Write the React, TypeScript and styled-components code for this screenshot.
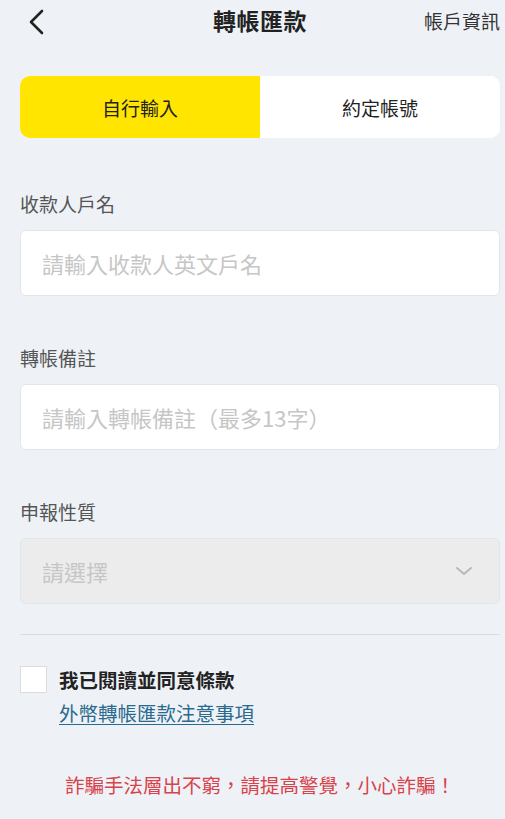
import styled, { createGlobalStyle } from "styled-components";

const GlobalStyle = createGlobalStyle`
  html, body {
    margin: 0;
    padding: 0;
    background: #eef2f7;
  }
  body {
    font-family: "Noto Sans CJK TC", "Noto Sans", sans-serif;
  }
`;

const Page = styled.div`
  width: 505px;
  height: 819px;
  box-sizing: border-box;
  padding: 0 5px 0 20px;
  background: #eef2f7;
  overflow: hidden;
`;

const Header = styled.div`
  height: 40px;
  display: grid;
  grid-template-columns: 90px 1fr 90px;
  align-items: center;
`;

const BackButton = styled.div`
  display: flex;
  align-items: center;
  padding-left: 6px;
  margin-top: 4px;
`;

const Title = styled.div`
  text-align: center;
  font-size: 23px;
  font-weight: 700;
  color: #222;
  letter-spacing: 0.5px;
`;

const HeaderLink = styled.div`
  text-align: right;
  font-size: 19px;
  color: #333;
`;

const Tabs = styled.div`
  margin-top: 36px;
  display: flex;
  height: 62px;
  border-radius: 10px;
  overflow: hidden;
  background: #ffffff;
`;

const Tab = styled.div<{ active?: boolean }>`
  flex: 1;
  display: flex;
  align-items: center;
  justify-content: center;
  font-size: 19px;
  color: #222;
  background: ${(props) => (props.active ? "#ffe500" : "#ffffff")};
`;

const Field = styled.div<{ first?: boolean }>`
  margin-top: ${(props) => (props.first ? "53px" : "49px")};
`;

const Label = styled.div`
  font-size: 19px;
  line-height: 26px;
  color: #555;
  margin-bottom: 13px;
`;

const InputBox = styled.div<{ disabled?: boolean }>`
  height: 66px;
  box-sizing: border-box;
  border: 1px solid #e2e5ea;
  border-radius: 6px;
  background: ${(props) => (props.disabled ? "#ececec" : "#ffffff")};
  display: flex;
  align-items: center;
  justify-content: space-between;
  padding: 0 26px 0 21px;
`;

const Placeholder = styled.span`
  font-size: 22px;
  color: #c6c6c6;
`;

const Divider = styled.div`
  margin-top: 30px;
  height: 1px;
  background: #d9dce1;
`;

const AgreeRow = styled.div`
  margin-top: 31px;
  display: flex;
  gap: 12px;
`;

const CheckBox = styled.div`
  width: 27px;
  height: 27px;
  box-sizing: border-box;
  border: 1px solid #dcdcdc;
  background: #ffffff;
  flex-shrink: 0;
`;

const AgreeText = styled.div`
  display: flex;
  flex-direction: column;
`;

const AgreeTitle = styled.div`
  font-size: 19.5px;
  font-weight: 700;
  color: #222;
  line-height: 28px;
`;

const TermsLink = styled.a`
  margin-top: 6px;
  font-size: 19.5px;
  line-height: 26px;
  color: #2b6a8f;
  text-decoration: underline;
  text-underline-offset: 3px;
`;

const Warning = styled.div`
  margin-top: 44px;
  text-align: center;
  font-size: 19.5px;
  color: #d8434b;
`;

const Chevron = () => (
  <svg width="20" height="28" viewBox="0 0 20 28">
    <path d="M16 3 L5 14 L16 25" fill="none" stroke="#222" strokeWidth="2.6" strokeLinecap="round" strokeLinejoin="round" />
  </svg>
);

const Caret = () => (
  <svg width="18" height="12" viewBox="0 0 18 12">
    <path d="M2 3 L9 9 L16 3" fill="none" stroke="#b8b8b8" strokeWidth="2" strokeLinecap="round" strokeLinejoin="round" />
  </svg>
);

const App = () => {
  return (
    <Page>
      <GlobalStyle />
      <Header>
        <BackButton>
          <Chevron />
        </BackButton>
        <Title>轉帳匯款</Title>
        <HeaderLink>帳戶資訊</HeaderLink>
      </Header>

      <Tabs>
        <Tab active>自行輸入</Tab>
        <Tab>約定帳號</Tab>
      </Tabs>

      <Field first>
        <Label>收款人戶名</Label>
        <InputBox>
          <Placeholder>請輸入收款人英文戶名</Placeholder>
        </InputBox>
      </Field>

      <Field>
        <Label>轉帳備註</Label>
        <InputBox>
          <Placeholder>請輸入轉帳備註（最多13字）</Placeholder>
        </InputBox>
      </Field>

      <Field>
        <Label>申報性質</Label>
        <InputBox disabled>
          <Placeholder>請選擇</Placeholder>
          <Caret />
        </InputBox>
      </Field>

      <Divider />

      <AgreeRow>
        <CheckBox />
        <AgreeText>
          <AgreeTitle>我已閱讀並同意條款</AgreeTitle>
          <TermsLink>外幣轉帳匯款注意事項</TermsLink>
        </AgreeText>
      </AgreeRow>

      <Warning>詐騙手法層出不窮，請提高警覺，小心詐騙！</Warning>
    </Page>
  );
};

export default App;
